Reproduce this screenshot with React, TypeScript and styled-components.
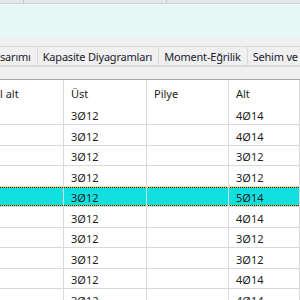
import styled, { createGlobalStyle } from "styled-components";

const GlobalStyle = createGlobalStyle`
    html, body {
        margin: 0;
        padding: 0;
        overflow: hidden;
        background: #f0f0f0;
    }
    body {
        font-family: "Noto Sans", "Open Sans", sans-serif;
        font-size: 11px;
        color: #1a1a1a;
    }
`;

const Screen = styled.div`
    width: 300px;
    height: 300px;
    display: flex;
    flex-direction: column;
    overflow: hidden;
    background: #f0f0f0;
    & > * {
        flex: none;
    }
`;

const TopStrip = styled.div`
    height: 3px;
    display: grid;
    grid-template-columns: 24px 143px 1fr;
    background: #e6e6e6;
    border-bottom: 1px solid #d4d4d4;
`;

const StripCell = styled.div`
    border-right: 1px solid #c8c8d4;
`;

const InfoPanel = styled.div`
    height: 32px;
    background: #e6f8f5;
`;

const TabStrip = styled.div`
    margin-top: 10px;
    height: 20px;
    display: flex;
    white-space: nowrap;
    overflow: hidden;
`;

const Tab = styled.div<{ $offset?: number }>`
    flex: none;
    display: flex;
    align-items: center;
    padding: 1px 6px 0 5px;
    box-sizing: border-box;
    height: 20px;
    margin-left: ${(p) => p.$offset ?? 0}px;
    border: 1px solid #dadada;
    border-left: none;
    background: #f0f0f0;
    color: #1a1a2e;
    letter-spacing: -0.2px;
`;

const TabGap = styled.div`
    height: 12px;
    border-top: 1px solid #dcdcdc;
`;

const Grid = styled.div`
    flex: 1 1 auto !important;
    min-height: 0;
    overflow: hidden;
    background: #ffffff;
    border-top: 1px solid #a8a8a8;
    display: flex;
    flex-direction: column;
`;

const Row = styled.div<{ $height: number; $selected?: boolean; $plain?: boolean }>`
    flex: none;
    height: ${(p) => p.$height}px;
    display: grid;
    grid-template-columns: 64px 83px 82px 1fr;
    box-sizing: border-box;
    border-bottom: ${(p) => (p.$plain ? "none" : "1px solid #d9d9d9")};
    background: ${(p) =>
        p.$selected
            ? `repeating-linear-gradient(90deg, #2a2a10 0 1px, #c8c820 1px 2px) top / 100% 1px no-repeat,
               repeating-linear-gradient(90deg, #2a2a10 0 1px, #c8c820 1px 2px) bottom / 100% 1px no-repeat,
               #12e0e0`
            : "#ffffff"};
`;

const Cell = styled.div<{ $indent?: number }>`
    display: flex;
    align-items: center;
    padding-top: 3px;
    padding-left: ${(p) => p.$indent ?? 7}px;
    border-right: 1px solid #d9d9d9;
    white-space: nowrap;
    overflow: hidden;
    color: #1e1e1e;
`;

const rows = [
    { ust: "3Ø12", alt: "4Ø14" },
    { ust: "3Ø12", alt: "4Ø14" },
    { ust: "3Ø12", alt: "3Ø12" },
    { ust: "3Ø12", alt: "3Ø12" },
    { ust: "3Ø12", alt: "5Ø14", selected: true },
    { ust: "3Ø12", alt: "4Ø14" },
    { ust: "3Ø12", alt: "3Ø12" },
    { ust: "3Ø12", alt: "3Ø12" },
    { ust: "3Ø12", alt: "4Ø14" },
    { ust: "3Ø12", alt: "4Ø14" },
];

export default function App() {
    return (
        <Screen>
            <GlobalStyle />
            <TopStrip>
                <StripCell />
                <StripCell />
                <div />
            </TopStrip>
            <InfoPanel />
            <TabStrip>
                <Tab $offset={-5}>sarımı</Tab>
                <Tab>Kapasite Diyagramları</Tab>
                <Tab>Moment-Eğrilik</Tab>
                <Tab>Sehim ve Çatlak</Tab>
            </TabStrip>
            <TabGap />
            <Grid>
                <Row $height={24.5} $plain>
                    <Cell $indent={0}>l alt</Cell>
                    <Cell>Üst</Cell>
                    <Cell>Pilye</Cell>
                    <Cell>Alt</Cell>
                </Row>
                {rows.map((r, i) => (
                    <Row key={i} $height={20.5} $selected={r.selected}>
                        <Cell />
                        <Cell>{r.ust}</Cell>
                        <Cell />
                        <Cell>{r.alt}</Cell>
                    </Row>
                ))}
            </Grid>
        </Screen>
    );
}
